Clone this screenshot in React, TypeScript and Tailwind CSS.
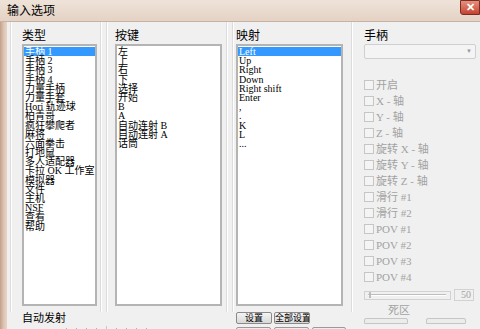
import React from "react";

const cjk = {fontFamily: '"Liberation Serif", "Noto Sans CJK SC", serif'};

const types = ["手柄 1", "手柄 2", "手柄 3", "手柄 4", "力量手柄", "力量手套", "Hori 轨迹球", "柏青哥", "疯狂攀爬者", "麻将",
    "六面拳击", "打地鼠", "多人适配器", "卡拉 OK 工作室", "模拟器", "文件", "主机", "NSF", "查看", "帮助"];
const keys = ["左", "上", "右", "下", "选择", "开始", "B", "A", "自动连射 B", "自动连射 A", "话筒"];
const maps = ["Left", "Up", "Right", "Down", "Right shift", "Enter", ",", ".", "K", "L", "..."];
const axes = ["开启", "X - 轴", "Y - 轴", "Z - 轴", "旋转 X - 轴", "旋转 Y - 轴", "旋转 Z - 轴", "滑行 #1", "滑行 #2",
    "POV #1", "POV #2", "POV #3", "POV #4"];

function ListBox({items, selected, width}: { items: string[], selected?: number, width: string }) {
    return <div className={`${width} h-[262px] shrink-0 border-2 border-[#b4b4b4] bg-white pt-[1px] overflow-hidden`}>
        {items.map((item, i) =>
            <div key={item}
                 className={`h-[9.2px] leading-[9.2px] text-[10px] pl-[1px] whitespace-pre ${i === selected ? "bg-[#3399ff] text-white" : "text-black"}`}>
                {item}
            </div>)}
    </div>
}

function Label({children}: { children: string }) {
    return <div className="h-[22px] pt-[8px] leading-[13px] text-[12px] text-black">{children}</div>
}

function Divider() {
    return <div className="flex h-[290px] shrink-0">
        <div className="w-px bg-[#dcdcdc]"/>
        <div className="w-px bg-white"/>
    </div>
}

function Gap({width}: { width: string }) {
    return <div className={`${width} shrink-0`}/>
}

function Btn({children, width}: { children: string, width: string }) {
    return <button
        className={`${width} h-[12px] border border-[#8a8a8a] rounded-[2px] bg-gradient-to-b from-[#f4f4f4] to-[#d8d8d8] text-[9px] leading-[10px] text-black whitespace-nowrap overflow-hidden`}>
        {children}
    </button>
}

export default function App() {
    return <div className="w-[480px] h-[329px] overflow-hidden flex flex-col bg-[#f0f0f0]" style={cjk}>
        <div className="h-[22px] shrink-0 flex items-start bg-gradient-to-b from-[#efe3d9] to-[#e4d2c4] border-b border-[#c7b3a3]">
            <div className="pl-[7px] pt-[5px] text-[12px] leading-[13px] text-black">输入选项</div>
            <div className="ml-auto w-[20px] h-[15px] rounded-bl-[3px] border border-[#7c2c20] bg-gradient-to-b from-[#e3917f] to-[#c5412e] text-white text-[11px] leading-[12px] text-center font-bold">✕</div>
        </div>
        <div className="flex flex-1">
            <div className="w-[7px] shrink-0 bg-gradient-to-r from-[#c2a08a] via-[#dcc3b1] to-[#e8d6c9]"/>
            <div className="flex-1 flex">
                <Gap width="w-[3px]"/>
                <Divider/>
                <Gap width="w-[10px]"/>
                <div className="flex flex-col w-[75px] shrink-0">
                    <Label>类型</Label>
                    <ListBox items={types} selected={0} width="w-[75px]"/>
                    <div className="mt-[6px] text-[11px] leading-[12px] text-black whitespace-nowrap">自动发射</div>
                    <div className="flex items-end gap-[9px] pl-[44px] h-[6px] w-[150px]">
                        {[0, 1, 2, 3, 4, 5, 6, 7, 8].map(i =>
                            <div key={i} className={`w-px shrink-0 ${i === 4 ? "h-[4px] w-[4px] bg-[#c8c8c8]" : "h-[2px] bg-[#b0b0b0]"}`}/>)}
                    </div>
                </div>
                <Gap width="w-[3px]"/>
                <Divider/>
                <Gap width="w-[4px]"/>
                <Divider/>
                <Gap width="w-[7px]"/>
                <div className="flex flex-col shrink-0">
                    <Label>按键</Label>
                    <ListBox items={keys} width="w-[107px]"/>
                </div>
                <Gap width="w-[4px]"/>
                <Divider/>
                <Gap width="w-[4px]"/>
                <Divider/>
                <Gap width="w-[2px]"/>
                <div className="flex flex-col shrink-0">
                    <Label>映射</Label>
                    <ListBox items={maps} selected={0} width="w-[107px]"/>
                    <div className="flex gap-[2px] mt-[6px]">
                        <Btn width="w-[36px]">设置</Btn>
                        <Btn width="w-[36px]">全部设置</Btn>
                    </div>
                    <div className="flex gap-[3px] mt-[3px]">
                        <div className="w-[35px] h-[6px] border border-[#9a9a9a] rounded-t-[2px] bg-[#ececec]"/>
                        <div className="w-[35px] h-[6px] border border-[#9a9a9a] rounded-t-[2px] bg-[#ececec]"/>
                        <div className="w-[34px] h-[6px] border border-[#9a9a9a] rounded-t-[2px] bg-[#ececec]"/>
                    </div>
                </div>
                <Gap width="w-[5px]"/>
                <Divider/>
                <Gap width="w-[11px]"/>
                <div className="flex flex-col w-[112px] shrink-0">
                    <Label>手柄</Label>
                    <div className="h-[15px] border border-[#cfcfcf] rounded-[2px] bg-[#f4f4f4] flex items-center justify-end pr-[3px]">
                        <span className="text-[6px] text-[#9a9a9a]">▼</span>
                    </div>
                    <div className="flex flex-col mt-[18px]">
                        {axes.map(a =>
                            <div key={a} className="h-[16px] flex items-center gap-[2px] text-[11px] text-[#a2a2a2]">
                                <div className="w-[10px] h-[10px] border border-[#c6c6c6] bg-[#f4f4f4]"/>
                                <span className="whitespace-pre">{a}</span>
                            </div>)}
                    </div>
                    <div className="flex items-center gap-[3px] mt-[4px]">
                        <div className="w-[87px] h-[9px] border border-[#d2d2d2] relative flex items-center">
                            <div className="absolute left-[3px] right-[4px] h-[2px] border-t border-[#bdbdbd] border-b border-b-white"/>
                            <div className="absolute left-[4px] w-[2px] h-[6px] bg-[#bdbdbd]"/>
                        </div>
                        <div className="w-[20px] h-[12px] border border-[#d2d2d2] text-[10px] leading-[10px] text-[#a2a2a2] text-right pr-[2px]">50</div>
                    </div>
                    <div className="pl-[24px] mt-[3px] text-[11px] leading-[12px] text-[#a2a2a2]">死区</div>
                    <div className="flex gap-[18px] mt-[2px]">
                        <div className="w-[44px] h-[6px] border border-[#c6c6c6] rounded-t-[2px] bg-[#ececec]"/>
                        <div className="w-[40px] h-[6px] border border-[#c6c6c6] rounded-t-[2px] bg-[#ececec]"/>
                    </div>
                </div>
            </div>
        </div>
    </div>
}
